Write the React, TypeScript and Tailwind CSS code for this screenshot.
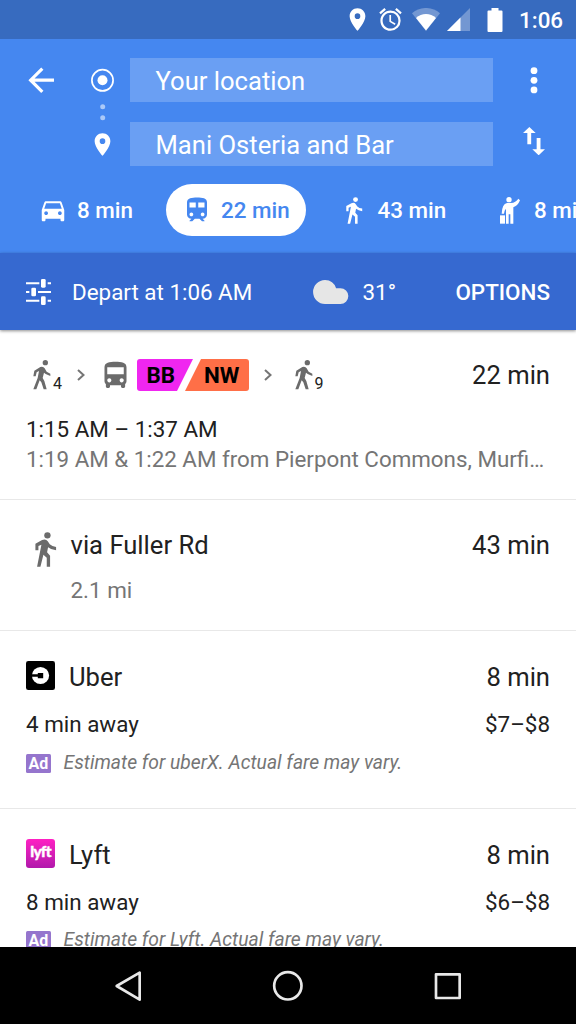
import type { ReactNode } from "react";
import { MdAccessAlarm, MdArrowBack, MdLocationOn } from "react-icons/md";

const CAR =
  "M18.92 6.01C18.72 5.42 18.16 5 17.5 5h-11c-.66 0-1.21.42-1.42 1.01L3 12v8c0 .55.45 1 1 1h1c.55 0 1-.45 1-1v-1h12v1c0 .55.45 1 1 1h1c.55 0 1-.45 1-1v-8l-2.08-5.99zM6.5 16c-.83 0-1.5-.67-1.5-1.5S5.67 13 6.5 13s1.5.67 1.5 1.5S7.33 16 6.5 16zm11 0c-.83 0-1.5-.67-1.5-1.5s.67-1.5 1.5-1.5 1.5.67 1.5 1.5-.67 1.5-1.5 1.5zM5 11l1.5-4.5h11L19 11H5z";
const TRAIN =
  "M12 2c-4 0-8 .5-8 4v9.5C4 17.43 5.57 19 7.5 19L6 20.5v.5h2.23l2-2H14l2 2h2v-.5L16.5 19c1.93 0 3.5-1.57 3.5-3.5V6c0-3.5-3.58-4-8-4zM7.5 17c-.83 0-1.5-.67-1.5-1.5S6.67 14 7.5 14s1.5.67 1.5 1.5S8.33 17 7.5 17zm3.5-7H6V6h5v4zm2 0V6h5v4h-5zm3.5 7c-.83 0-1.5-.67-1.5-1.5s.67-1.5 1.5-1.5 1.5.67 1.5 1.5-.67 1.5-1.5 1.5z";
const BUS =
  "M4 16c0 .88.39 1.67 1 2.22V20c0 .55.45 1 1 1h1c.55 0 1-.45 1-1v-1h8v1c0 .55.45 1 1 1h1c.55 0 1-.45 1-1v-1.78c.61-.55 1-1.34 1-2.22V6c0-3.5-3.58-4-8-4s-8 .5-8 4v10zm3.5 1c-.83 0-1.5-.67-1.5-1.5S6.67 14 7.5 14s1.5.67 1.5 1.5S8.33 17 7.5 17zm9 0c-.83 0-1.5-.67-1.5-1.5s.67-1.5 1.5-1.5 1.5.67 1.5 1.5-.67 1.5-1.5 1.5zm1.5-6H6V6h12v5z";

function Glyph({ d, className }: { d: string; className: string }) {
  return (
    <svg className={className} viewBox="0 0 24 24" fill="currentColor">
      <path d={d} />
    </svg>
  );
}

function WalkIcon({ className }: { className: string }) {
  return (
    <svg className={className} viewBox="105 35 64 105" fill="currentColor">
      <circle cx="142" cy="45" r="9.5" />
      <path d="M106 90V70L126 59Q137 54 143 63L149 72Q156 79 168 80V90Q153 89 144 81L141 96L150 106V139H140V112L130 103L121 139H111L124 73L115 77V90Z" />
    </svg>
  );
}

function StatusBar() {
  return (
    <div className="flex h-[39px] shrink-0 items-center bg-[#376bbf] pl-[343.5px] text-white">
      <MdLocationOn className="size-[27px] shrink-0" />
      <MdAccessAlarm className="ml-[6px] size-[27px] shrink-0" />
      <svg className="ml-[8.5px] h-[23px] w-[28px] shrink-0" viewBox="0 0 28 23">
        <path d="M0 5.3C8-1.8 20-1.8 28 5.3L14 23Z" fill="#fff" opacity=".3" />
        <path d="M4 10C9.5 4.8 18.5 4.8 24 10L14 22.5Z" fill="#fff" />
      </svg>
      <svg className="ml-[6.5px] h-[23px] w-[23px] shrink-0" viewBox="0 0 23 23">
        <path d="M23 0V23H0Z" fill="#fff" opacity=".3" />
        <path d="M13.5 9.5V23H0Z" fill="#fff" />
      </svg>
      <svg className="ml-[17px] h-[24px] w-[16px] shrink-0" viewBox="0 0 16 24">
        <path d="M4.5 0H11.5V2.5H14.5Q15.5 2.5 15.5 3.5V23Q15.5 24 14.5 24H1.5Q.5 24 .5 23V3.5Q.5 2.5 1.5 2.5H4.5Z" fill="#fff" />
      </svg>
      <span className="ml-[16.5px] mt-px text-[22.4px] font-medium leading-none">1:06</span>
    </div>
  );
}

function Field({ children }: { children: ReactNode }) {
  return (
    <div className="flex h-[45px] w-[363px] items-center bg-[#6a9ff3] pl-[25.5px] pt-[3px] text-[25.6px] leading-none text-white">
      {children}
    </div>
  );
}

function HailIcon() {
  return (
    <svg className="h-[27px] w-[20px] shrink-0" viewBox="643 63 60 81" fill="#fff">
      <circle cx="670" cy="71" r="8" />
      <path d="M698 68L703 73C698 86 691 91 683 94V143H674V115H669V143H661V98Q656 102 655 113H648Q649 84 664 81H676Q690 80 698 68Z" />
      <path d="M643 118H658V143H643Z" />
    </svg>
  );
}

function Header() {
  return (
    <div className="flex h-[214px] shrink-0 flex-col bg-[#4587f0] text-white">
      <div className="mt-[19px] flex h-[108px]">
        <div className="w-[90px] pl-[22px] pt-[3px]">
          <MdArrowBack className="size-[38.4px]" />
        </div>
        <div className="flex w-[40px] flex-col items-start">
          <svg className="mt-[10px] h-[62px] w-[25px]" viewBox="0 0 25 62">
            <circle cx="12.5" cy="12.3" r="10.6" fill="none" stroke="#fff" strokeWidth="1.7" />
            <circle cx="12.5" cy="12.3" r="5" fill="#fff" />
            <circle cx="12.7" cy="38.7" r="2.5" fill="#fff" opacity=".55" />
            <circle cx="12.7" cy="49.8" r="2.5" fill="#fff" opacity=".55" />
          </svg>
          <MdLocationOn className="-ml-px mt-px size-[27px]" />
        </div>
        <div className="flex flex-col gap-[19.5px]">
          <Field>Your location</Field>
          <Field>Mani Osteria and Bar</Field>
        </div>
        <div className="ml-[30px] flex w-[22px] flex-col items-center">
          <svg className="mt-[9px] h-[27px] w-[8px]" viewBox="0 0 8 27" fill="#fff">
            <circle cx="4" cy="3.7" r="3.4" />
            <circle cx="4" cy="13.3" r="3.4" />
            <circle cx="4" cy="22.9" r="3.4" />
          </svg>
          <svg className="mt-[32.7px] h-[28.3px] w-[22px]" viewBox="160 50 66 85" fill="#fff">
            <path d="M179 50L198 68H184.5V102H173V68H160Z" />
            <path d="M207 135L188 117H201V83H212.5V117H226Z" />
          </svg>
        </div>
      </div>
      <div className="mt-[18px] flex h-[52px] items-center overflow-hidden whitespace-nowrap text-[22.4px] font-medium leading-none">
        <div className="flex w-[166px] shrink-0 items-center pl-[38px]">
          <Glyph d={CAR} className="size-[30px]" />
          <span className="ml-[9px]">8 min</span>
        </div>
        <div className="flex h-full w-[140px] shrink-0 items-center rounded-full bg-white pl-[16px] text-[#4587f0]">
          <Glyph d={TRAIN} className="size-[30px]" />
          <span className="ml-[9px]">22 min</span>
        </div>
        <div className="flex w-[194px] shrink-0 items-center pl-[40px]">
          <WalkIcon className="h-[27px] w-[16.5px]" />
          <span className="ml-[15px]">43 min</span>
        </div>
        <HailIcon />
        <span className="ml-[14px]">8 min</span>
      </div>
    </div>
  );
}

function OptionsBar() {
  return (
    <div className="z-10 flex h-[77px] shrink-0 items-center bg-[#3669d0] px-[26px] text-[22.4px] leading-none text-white shadow-[0_1px_3px_rgba(0,0,0,0.45)]">
      <svg className="h-[26px] w-[25px]" viewBox="78 312 75 78" fill="#fff">
        <path d="M78 322H118V328H78ZM143 322H153V328H143ZM78 348H88V354H78ZM114 348H153V354H114ZM78 374H118V380H78ZM143 374H153V380H143Z" />
        <rect x="123" y="312" width="14" height="26" rx="4" />
        <rect x="94" y="338" width="14" height="26" rx="4" />
        <rect x="123" y="364" width="14" height="26" rx="4" />
      </svg>
      <span className="ml-[21px] mt-[2px] w-[241px]">Depart at 1:06 AM</span>
      <svg className="h-[24px] w-[35.5px]" viewBox="81 315 106 72">
        <path d="M117 315A36 36 0 0 1 150 339.5H163A23.7 23.7 0 0 1 163 387H117A36 36 0 0 1 117 315Z" fill="#e6e6e6" />
      </svg>
      <span className="ml-[14px] mt-[2px]">31°</span>
      <span className="ml-auto mt-[2px] font-medium">OPTIONS</span>
    </div>
  );
}

function StrideIcon() {
  return (
    <svg className="h-[30px] w-[18px] shrink-0" viewBox="100 43 54 90" fill="#6b6b6b">
      <circle cx="137" cy="51" r="8" />
      <path d="M101 92L104 75L122 64Q131 61 135 68L141 78L152 84V91L138 85L133 81L129 97L134 106L141 131H132L125 110L120 104L110 131H101L114 97L118 76L111 80L108 92Z" />
    </svg>
  );
}

function Chevron() {
  return (
    <svg className="h-[12px] w-[8px] shrink-0" viewBox="0 0 8 12" fill="none" stroke="#757575" strokeWidth="2">
      <path d="M1 1L6.5 6L1 11" />
    </svg>
  );
}

function TransitRoute() {
  return (
    <div className="h-[170px] shrink-0 border-b border-[#e8e8e8] px-[26px] pt-[29px]">
      <div className="flex h-[32px] items-center">
        <div className="flex h-full w-[51px] items-end pb-px pl-[7px]">
          <StrideIcon />
          <span className="ml-[2px] text-[16px] leading-[12px]">4</span>
        </div>
        <Chevron />
        <Glyph d={BUS} className="ml-[14px] size-[33px] text-[#6b6b6b]" />
        <div className="ml-[5px] flex h-[32px] text-[22.4px] font-bold leading-[32px] text-black">
          <div className="w-[56px] rounded-l-[3px] bg-[#f026f0] pl-[9.5px] [clip-path:polygon(0_0,100%_0,40px_100%,0_100%)]">BB</div>
          <div className="-ml-[8px] w-[64px] rounded-r-[3px] bg-[#ff6f47] pl-[19px] [clip-path:polygon(16px_0,100%_0,100%_100%,0_100%)]">NW</div>
        </div>
        <div className="ml-[15px] flex h-full items-center">
          <Chevron />
        </div>
        <div className="flex h-full items-end pb-px pl-[22.5px]">
          <StrideIcon />
          <span className="ml-[2px] text-[16px] leading-[12px]">9</span>
        </div>
        <span className="ml-auto mt-[2px] text-[25.6px] leading-none">22 min</span>
      </div>
      <div className="mt-[23px] text-[22.4px] leading-[30px]">1:15 AM – 1:37 AM</div>
      <div className="truncate text-[22.35px] leading-[30px] text-[#757575]">
        1:19 AM &amp; 1:22 AM from Pierpont Commons, Murfin Avenue
      </div>
    </div>
  );
}

function WalkRoute() {
  return (
    <div className="flex h-[131px] shrink-0 border-b border-[#e8e8e8] px-[26px] pt-[30px]">
      <WalkIcon className="ml-[9px] mt-[1.5px] h-[35px] w-[21.5px] text-[#6b6b6b]" />
      <div className="ml-[14px]">
        <div className="text-[25.6px] leading-[30px]">via Fuller Rd</div>
        <div className="mt-[15px] text-[22.4px] leading-[30px] text-[#757575]">2.1 mi</div>
      </div>
      <span className="ml-auto text-[25.6px] leading-[30px]">43 min</span>
    </div>
  );
}

type RideProps = { icon: ReactNode; name: string; away: string; price: string; note: string };

function RideOption({ icon, name, away, price, note }: RideProps) {
  return (
    <div className="h-[177.5px] shrink-0 border-b border-[#e8e8e8] px-[26px] pt-[30px]">
      <div className="flex h-[31px] items-start text-[25.6px] leading-[33px]">
        {icon}
        <span className="ml-[14px]">{name}</span>
        <span className="ml-auto">8 min</span>
      </div>
      <div className="mt-[17px] flex justify-between text-[22.4px] leading-[30px]">
        <span>{away}</span>
        <span>{price}</span>
      </div>
      <div className="mt-[9px] flex h-[29px] items-center">
        <span className="mt-px flex h-[19px] w-[25px] items-center justify-center rounded-[1.5px] bg-[#9575cd] pt-px text-[16px] font-bold leading-none text-white">
          Ad
        </span>
        <span className="ml-[12.5px] text-[19.3px] italic leading-none text-[#757575]">{note}</span>
      </div>
    </div>
  );
}

function UberLogo() {
  return (
    <svg className="size-[29px] shrink-0" viewBox="78 33 86 86">
      <rect x="78" y="33" width="86" height="86" rx="7" fill="#000" />
      <circle cx="121" cy="76" r="25.5" fill="#fff" />
      <path d="M93 72.5H113V68.5H129V84H113V79.5H93Z" fill="#000" />
    </svg>
  );
}

function LyftLogo() {
  return (
    <div className="flex size-[29px] shrink-0 items-center justify-center rounded-[3px] bg-linear-to-b from-[#ff20c3] to-[#b118ab]">
      <span className="-mt-[3px] font-[Lato,sans-serif] text-[15.5px] font-black leading-none tracking-[-0.8px] text-white [-webkit-text-stroke:0.4px_white]">
        lyft
      </span>
    </div>
  );
}

function NavBar() {
  return (
    <div className="flex h-[77px] shrink-0 items-center bg-black pl-[112px]">
      <svg className="h-[32px] w-[352px]" viewBox="66 58 1056 96" fill="none" stroke="#e8e8e8" strokeWidth="8" strokeLinejoin="round">
        <path d="M80 106L149 66V147Z" />
        <circle cx="593.5" cy="105.5" r="41" />
        <rect x="1038" y="71" width="71" height="71" />
      </svg>
    </div>
  );
}

export default function App() {
  return (
    <div className="flex h-[1024px] w-[576px] flex-col overflow-hidden bg-white font-[Roboto,sans-serif] text-[#212121]">
      <StatusBar />
      <Header />
      <OptionsBar />
      <div className="flex min-h-0 flex-1 flex-col overflow-hidden">
        <TransitRoute />
        <WalkRoute />
        <RideOption
          icon={<UberLogo />}
          name="Uber"
          away="4 min away"
          price="$7–$8"
          note="Estimate for uberX. Actual fare may vary."
        />
        <RideOption
          icon={<LyftLogo />}
          name="Lyft"
          away="8 min away"
          price="$6–$8"
          note="Estimate for Lyft. Actual fare may vary."
        />
      </div>
      <NavBar />
    </div>
  );
}
